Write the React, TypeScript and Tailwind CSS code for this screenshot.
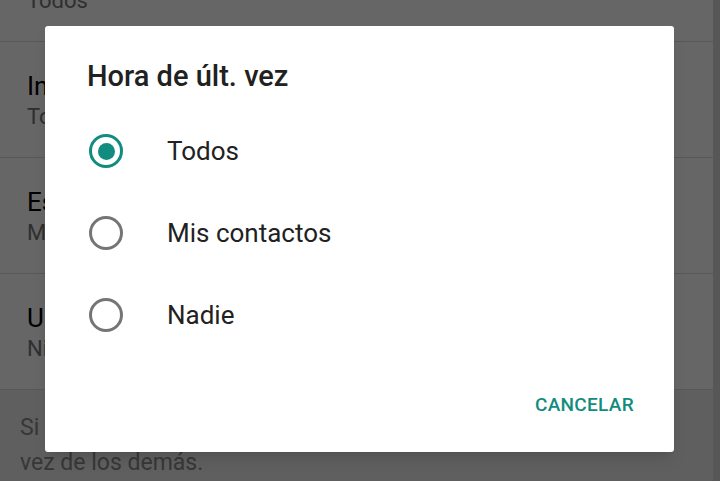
const rows = [
  { title: 'Hora de últ. vez', value: 'Todos' },
  { title: 'Info.', value: 'Todos' },
  { title: 'Estados', value: 'Mis contactos' },
  { title: 'Ubicación', value: 'Ninguno' },
];

const options = ['Todos', 'Mis contactos', 'Nadie'];

function Radio({ checked }: { checked: boolean }) {
  return (
    <div
      className={
        checked
          ? 'flex h-[34px] w-[34px] items-center justify-center rounded-full border-[3px] border-[#128c7e]'
          : 'flex h-[34px] w-[34px] items-center justify-center rounded-full border-[3px] border-[#757575]'
      }
    >
      {checked && <div className="h-[17px] w-[17px] rounded-full bg-[#128c7e]" />}
    </div>
  );
}

export default function App() {
  return (
    <div
      className="relative h-[481px] w-[720px] overflow-hidden bg-white"
      style={{ fontFamily: 'Roboto, "Noto Sans", sans-serif' }}
    >
      {/* settings list behind the dialog */}
      <div className="flex h-full">
        <div className="flex-1">
          <div className="-mt-[74px]">
            {rows.map((r) => (
              <div key={r.title} className="h-[116px] border-b border-[#dcdcdc] px-[27px] pt-[28px]">
                <div className="text-[26px] leading-[32px] text-black">{r.title}</div>
                <div className="text-[22px] leading-[30px] text-[#757575]">{r.value}</div>
              </div>
            ))}
          </div>
          <div className="h-full bg-[#eeeeee] px-[20px] pt-[20px] text-[23px] leading-[35px] text-[#8a8a8a]">
            Si no compartes tu hora de últ. vez, no podrás ver la hora de últ.
            <br />
            vez de los demás.
          </div>
        </div>
        <div className="w-[7px] bg-[#dadada]" />
      </div>

      {/* scrim */}
      <div className="absolute inset-0 bg-black/60" />

      {/* dialog */}
      <div className="absolute left-[45px] top-[26px] w-[629px] rounded-[3px] bg-white pb-[29px] pt-[33px] shadow-lg">
        <div className="pl-[42px] text-[29px] font-medium leading-[34px] text-[#212121]">Hora de últ. vez</div>
        <div className="mt-[17px]">
          {options.map((o, i) => (
            <div key={o} className="flex h-[82px] items-center pl-[44px]">
              <Radio checked={i === 0} />
              <span className="ml-[44px] text-[26px] text-[#212121]">{o}</span>
            </div>
          ))}
        </div>
        <div className="mt-[31px] flex justify-end pr-[40px]">
          <button className="h-[36px] text-[19px] font-medium tracking-[0.3px] text-[#128c7e]">CANCELAR</button>
        </div>
      </div>
    </div>
  );
}
